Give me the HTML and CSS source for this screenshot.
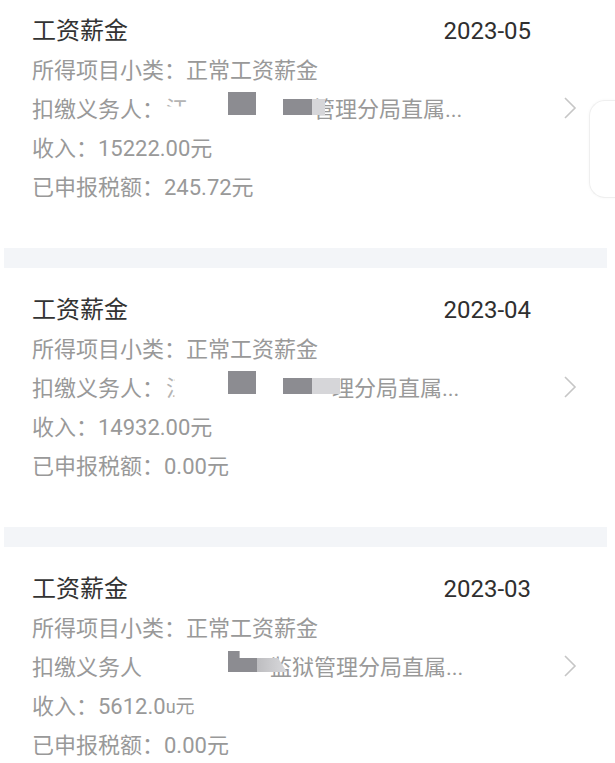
FILE: index.html
```html
<!DOCTYPE html>
<html lang="zh-CN">
<head>
<meta charset="utf-8">
<title>工资薪金</title>
<link rel="stylesheet" href="styles.css">
</head>
<body>
<div class="list">
  <div class="card first">
    <div class="head"><span class="title">工资薪金</span><span class="date">2023-05</span></div>
    <div class="line">所得项目小类：正常工资薪金</div>
    <div class="line payer">
      <span>扣缴义务人：</span>
      <span class="gap g64"><span class="ghost top">江</span></span>
      <span class="blk dark tall"></span>
      <span class="gap g27"></span>
      <span class="blk dark low w29"></span>
      <span class="blk light low w13"></span>
      <span class="txt m12">管理分局直属...</span>
      <svg class="chev" width="14" height="24" viewBox="0 0 14 24"><polyline points="2,2 12,12 2,22" fill="none" stroke="#c6c6c6" stroke-width="1.6"/></svg>
    </div>
    <div class="line">收入：15222.00元</div>
    <div class="line">已申报税额：245.72元</div>
  </div>
  <div class="sep"></div>
  <div class="card">
    <div class="head"><span class="title">工资薪金</span><span class="date">2023-04</span></div>
    <div class="line">所得项目小类：正常工资薪金</div>
    <div class="line payer">
      <span>扣缴义务人：</span>
      <span class="gap g64"><span class="ghost left">江</span></span>
      <span class="blk dark tall"></span>
      <span class="gap g27"></span>
      <span class="blk dark low w29"></span>
      <span class="blk light low w28"></span>
      <span class="txt m8">理分局直属...</span>
      <svg class="chev" width="14" height="24" viewBox="0 0 14 24"><polyline points="2,2 12,12 2,22" fill="none" stroke="#c6c6c6" stroke-width="1.6"/></svg>
    </div>
    <div class="line">收入：14932.00元</div>
    <div class="line">已申报税额：0.00元</div>
  </div>
  <div class="sep"></div>
  <div class="card last">
    <div class="head"><span class="title">工资薪金</span><span class="date">2023-03</span></div>
    <div class="line">所得项目小类：正常工资薪金</div>
    <div class="line payer">
      <span>扣缴义务人</span>
      <span class="gap g86"></span>
      <span class="blk dark notch"></span>
      <span class="blk light slant"></span>
      <span class="txt m17">监狱管理分局直属...</span>
      <svg class="chev" width="14" height="24" viewBox="0 0 14 24"><polyline points="2,2 12,12 2,22" fill="none" stroke="#c6c6c6" stroke-width="1.6"/></svg>
    </div>
    <div class="line">收入：5612.0<span class="u">u</span><span class="small">元</span></div>
    <div class="line">已申报税额：0.00元</div>
  </div>
</div>
<div class="edge"></div>
</body>
</html>
```

FILE: styles.css
```css
html, body {
  margin: 0;
  padding: 0;
  background: #ffffff;
  overflow: hidden;
}
body {
  width: 615px;
  height: 763px;
  position: relative;
  font-family: Roboto, "Noto Sans CJK SC", sans-serif;
}
.list {
  display: flex;
  flex-direction: column;
  height: 763px;
  overflow: hidden;
}
.card {
  display: flex;
  flex-direction: column;
  flex: none;
  padding: 22px 0 41px 32px;
}
.card.first {
  padding-top: 11px;
}
.card.last {
  padding-bottom: 0;
}
.head {
  width: 499px;
  height: 40px;
  display: flex;
  align-items: center;
  justify-content: space-between;
  color: #333333;
  font-size: 24px;
  line-height: 40px;
}
.date {
  color: #2f2f2f;
}
.line {
  height: 39px;
  line-height: 39px;
  display: flex;
  align-items: center;
  font-size: 22px;
  color: #999999;
  white-space: nowrap;
}
.payer {
  width: 545px;
}
.gap {
  display: inline-block;
  height: 39px;
  overflow: hidden;
}
.g64 { width: 64px; }
.g27 { width: 27px; }
.g86 { width: 86px; }
.ghost {
  display: inline-block;
  margin-left: 2px;
  color: #b4b4b4;
}
.ghost.top {
  clip-path: inset(0 0 58% 0);
}
.ghost.left {
  clip-path: inset(0 62% 0 0);
}
.blk {
  display: block;
  flex: none;
  align-self: flex-start;
  position: relative;
  z-index: 1;
}
.dark {
  background: #8c8c91;
}
.light {
  background: #d6d6d9;
}
.tall {
  width: 28px;
  height: 23px;
  margin-top: 2px;
}
.low {
  height: 16px;
  margin-top: 9px;
}
.w29 { width: 29px; }
.w13 { width: 13px; }
.w28 { width: 28px; }
.notch {
  width: 29px;
  height: 21px;
  margin-top: 3px;
  clip-path: polygon(0 0, 40% 0, 40% 33%, 100% 33%, 100% 100%, 0 100%);
}
.slant {
  width: 30px;
  height: 14px;
  margin-top: 10px;
  background: linear-gradient(90deg, #bdbdc0, #d9d9dc);
  clip-path: polygon(0 0, 70% 0, 100% 100%, 0 100%);
}
.txt {
  position: relative;
}
.m12 { margin-left: -12px; }
.m8 { margin-left: -8px; }
.m17 { margin-left: -17px; }
.u {
  font-size: 18px;
}
.small {
  font-size: 19px;
}
.chev {
  margin-left: auto;
  flex: none;
  margin-top: -4px;
}
.sep {
  flex: none;
  height: 20px;
  margin: 0 8px 0 4px;
  background: #f3f5f8;
}
.edge {
  position: absolute;
  left: 589px;
  top: 100px;
  width: 25px;
  height: 96px;
  border: 1px solid #efefef;
  border-right: none;
  border-radius: 16px 0 0 16px;
  box-shadow: 0 0 3px rgba(0, 0, 0, 0.04);
}
```
